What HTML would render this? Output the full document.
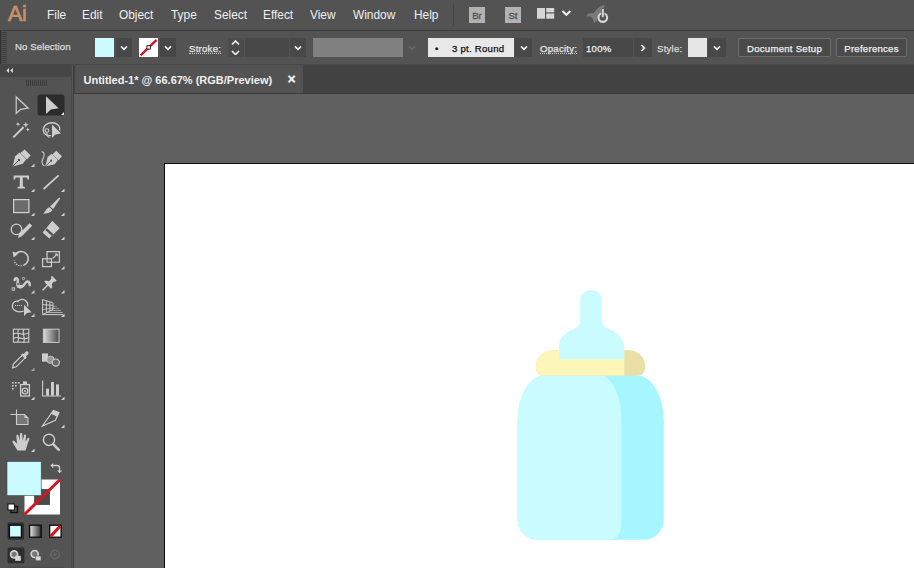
<!DOCTYPE html>
<html><head><meta charset="utf-8">
<style>
html,body{margin:0;padding:0;}
body{width:914px;height:568px;overflow:hidden;background:#606060;font-family:"Liberation Sans","DejaVu Sans",sans-serif;position:relative;color:#e8e8e8;}
.abs{position:absolute;}
#menubar{left:0;top:0;width:914px;height:30px;background:#535353;}
#menubar .mi{transform:scaleX(.95);transform-origin:0 0;position:absolute;top:8px;font-size:12.5px;color:#f0f0f0;line-height:14px;white-space:nowrap;}
#ctrl{left:0;top:31px;width:914px;height:33px;background:#535353;}
#sepline{left:0;top:30px;width:914px;height:1px;background:#3c3c3c;}
#tabstrip{left:74px;top:64px;width:840px;height:29px;background:#424242;}
#tab{left:75px;top:64px;width:228px;height:29px;background:#535353;}
#tabline{left:74px;top:93px;width:840px;height:1px;background:#3c3c3c;}
#tools{left:0;top:64px;width:71px;height:504px;background:#535353;}
#toolsline{left:73px;top:64px;width:1px;height:504px;background:#3c3c3c;}
#toolshead{left:0;top:64px;width:73px;height:12px;background:#464646;}
#canvas{left:74px;top:94px;width:840px;height:474px;background:#606060;}
#artboard{left:164px;top:163px;width:760px;height:420px;background:#fff;border:1px solid #0c0c0c;box-sizing:border-box;}
.lbl{-webkit-text-stroke:0.25px currentColor;position:absolute;font-size:9.6px;letter-spacing:0.25px;white-space:nowrap;color:#e4e4e4;line-height:12px;}
.box{position:absolute;box-sizing:border-box;}
</style></head><body>
<div id="menubar" class="abs">
  <div class="abs" style="left:8px;top:0px;font-size:21.5px;line-height:28px;color:#c6916a;letter-spacing:-0.3px;-webkit-text-stroke:0.7px #c6916a;">Ai</div>
  <div class="mi" style="left:47px;">File</div>
  <div class="mi" style="left:82px;">Edit</div>
  <div class="mi" style="left:119px;">Object</div>
  <div class="mi" style="left:171px;">Type</div>
  <div class="mi" style="left:214px;">Select</div>
  <div class="mi" style="left:263px;">Effect</div>
  <div class="mi" style="left:310px;">View</div>
  <div class="mi" style="left:353px;">Window</div>
  <div class="mi" style="left:414px;">Help</div>
  <div class="abs" style="left:453px;top:3px;width:1px;height:23px;background:#464646;"></div>
  <div class="abs" style="left:469px;top:7px;width:16px;height:16px;background:#b2b2b2;color:#505050;font-size:9.5px;line-height:18px;text-align:center;-webkit-text-stroke:0.3px #505050;">Br</div>
  <div class="abs" style="left:505px;top:7px;width:16px;height:16px;background:#b2b2b2;color:#505050;font-size:9.5px;line-height:18px;text-align:center;-webkit-text-stroke:0.3px #505050;">St</div>
  <svg class="abs" style="left:536px;top:7px" width="20" height="14" viewBox="536 7 20 14"><rect x="537" y="8" width="8" height="10.7" fill="#d6d6d6"/><rect x="546.2" y="8" width="8" height="4.3" fill="#d6d6d6"/><rect x="546.2" y="13.5" width="8" height="5.2" fill="#d6d6d6"/></svg>
  <svg class="abs" style="left:560px;top:8px" width="12" height="10" viewBox="560 8 12 10"><polyline points="562.4,11 566.400,14.800 570.400,11" fill="none" stroke="#f0f0f0" stroke-width="2"/></svg>
  <svg class="abs" style="left:584px;top:2px" width="28" height="24" viewBox="584 2 28 24">
    <path d="M604.5,4.5 C600,6 596,9.500 593.500,13 L588,13.500 L586,16.500 L591,16.500 L593,19 L594,23 L597,21 L597.500,17 C601,14.500 604,10 604.500,4.500 Z" fill="#7a7a7a"/>
    <circle cx="602.8" cy="17.600" r="4.300" fill="none" stroke="#d8d8d8" stroke-width="2.100"/>
    <rect x="601.2" y="8.500" width="3.200" height="9" fill="#535353"/>
    <rect x="601.8" y="9" width="2" height="8.200" fill="#d8d8d8"/>
  </svg>

</div>
<div id="sepline" class="abs"></div>
<div id="ctrl" class="abs"></div>
<!--CTRL-->
<div class="abs" style="left:0px;top:32px;width:7px;height:32px;background:repeating-linear-gradient(180deg,#3d3d3d 0 1px,#515151 1px 2px);"></div><div class="abs" style="left:0px;top:31px;width:1px;height:33px;background:#303030;"></div>
<div class="lbl" style="left:15px;top:41px;letter-spacing:0.1px;color:#dcdcdc;">No Selection</div>
<div class="box" style="left:95px;top:38px;width:19px;height:19px;background:#ccfbff;"></div>
<div class="box" style="left:116px;top:38px;width:16px;height:19px;background:#474747;"></div>
<svg class="abs" style="left:118.5px;top:44.5px" width="10" height="6" viewBox="-1 -1 10 6"><polyline points="1,0.4 4.0,3.4 7,0.4" fill="none" stroke="#f0f0f0" stroke-width="1.6"/></svg>
<svg class="abs" style="left:139px;top:38px" width="19" height="19" viewBox="0 0 19 19"><rect width="19" height="19" fill="#fff"/><line x1="1.6" y1="17.300" x2="17.600" y2="1.800" stroke="#d8121f" stroke-width="2.300"/><rect x="7.900" y="7.700" width="3.400" height="3.400" fill="#fff" stroke="#30080a" stroke-width="0.900"/></svg>
<div class="box" style="left:160px;top:38px;width:16px;height:19px;background:#474747;"></div>
<svg class="abs" style="left:163px;top:44.5px" width="10" height="6" viewBox="-1 -1 10 6"><polyline points="1,0.4 4.0,3.4 7,0.4" fill="none" stroke="#f0f0f0" stroke-width="1.6"/></svg>
<div class="lbl" style="left:189px;top:43px;color:#e8e8e8;border-bottom:1px dotted #cfcfcf;height:9.5px;">Stroke:</div>
<div class="box" style="left:228px;top:38px;width:16px;height:19px;background:#4b4b4b;"></div>
<svg class="abs" style="left:231.0px;top:40px" width="9" height="5.5" viewBox="-1 -1 9 5.5"><polyline points="0,3.5 3.5,0 7,3.5" fill="none" stroke="#f0f0f0" stroke-width="1.6"/></svg>
<svg class="abs" style="left:231.0px;top:49.5px" width="9" height="5.5" viewBox="-1 -1 9 5.5"><polyline points="0,0 3.5,3.5 7,0" fill="none" stroke="#f0f0f0" stroke-width="1.6"/></svg>
<div class="box" style="left:245px;top:38px;width:44px;height:19px;background:#484848;"></div>
<div class="box" style="left:290px;top:38px;width:16px;height:19px;background:#484848;"></div>
<svg class="abs" style="left:292.5px;top:44.5px" width="10" height="6" viewBox="-1 -1 10 6"><polyline points="1,0.4 4.0,3.4 7,0.4" fill="none" stroke="#f0f0f0" stroke-width="1.6"/></svg>
<div class="box" style="left:313px;top:38px;width:90px;height:19px;background:#808080;"></div>
<svg class="abs" style="left:407.0px;top:44.5px" width="10" height="6" viewBox="-1 -1 10 6"><polyline points="1,0.4 4.0,3.4 7,0.4" fill="none" stroke="#6a6a6a" stroke-width="1.6"/></svg>
<div class="box" style="left:428px;top:38px;width:86px;height:19px;background:#e8e8e8;"></div>
<div class="lbl" style="left:435px;top:43px;color:#111;">•</div>
<div class="lbl" style="left:452px;top:43px;color:#111;">3 pt. Round</div>
<div class="box" style="left:515px;top:38px;width:17px;height:19px;background:#484848;"></div>
<svg class="abs" style="left:518.5px;top:44.5px" width="10" height="6" viewBox="-1 -1 10 6"><polyline points="1,0.4 4.0,3.4 7,0.4" fill="none" stroke="#f0f0f0" stroke-width="1.6"/></svg>
<div class="lbl" style="left:540px;top:43px;color:#e8e8e8;border-bottom:1px dotted #cfcfcf;height:9.5px;">Opacity:</div>
<div class="box" style="left:583px;top:38px;width:50px;height:19px;background:#484848;"></div>
<div class="lbl" style="left:586px;top:43px;color:#f0f0f0;">100%</div>
<div class="box" style="left:634px;top:38px;width:18px;height:19px;background:#484848;"></div>
<svg class="abs" style="left:639.5px;top:42.5px" width="6" height="10" viewBox="-1 -1 6 10"><polyline points="0.4,1 3.4,4.0 0.4,7" fill="none" stroke="#f0f0f0" stroke-width="1.6"/></svg>
<div class="lbl" style="left:657px;top:43px;color:#dcdcdc;">Style:</div>
<div class="box" style="left:688px;top:38px;width:19px;height:19px;background:#e6e6e6;"></div>
<div class="box" style="left:708px;top:38px;width:18px;height:19px;background:#484848;"></div>
<svg class="abs" style="left:711.5px;top:44.5px" width="10" height="6" viewBox="-1 -1 10 6"><polyline points="1,0.4 4.0,3.4 7,0.4" fill="none" stroke="#f0f0f0" stroke-width="1.6"/></svg>
<div class="box" style="left:738px;top:38px;width:93px;height:19px;background:#4a4a4a;border:1px solid #6c6c6c;border-radius:2px;"></div>
<div class="lbl" style="left:738px;top:43px;width:93px;text-align:center;color:#f0f0f0;">Document Setup</div>
<div class="box" style="left:836px;top:38px;width:71px;height:19px;background:#4a4a4a;border:1px solid #6c6c6c;border-radius:2px;"></div>
<div class="lbl" style="left:836px;top:43px;width:71px;text-align:center;color:#f0f0f0;">Preferences</div>
<!--/CTRL-->
<div id="tabstrip" class="abs"></div>
<div id="tab" class="abs"><div class="lbl" style="left:8.5px;top:10px;font-size:11px;letter-spacing:0;font-weight:bold;color:#f0f0f0;-webkit-text-stroke:0;">Untitled-1* @ 66.67% (RGB/Preview)</div><div class="lbl" style="left:212.5px;top:8.5px;font-size:14px;letter-spacing:0;font-weight:bold;color:#f4f4f4;">×</div></div>
<div id="tabline" class="abs"></div>
<div id="canvas" class="abs"></div>
<div id="artboard" class="abs"></div>
<svg class="abs" style="left:500px;top:280px" width="180" height="288" viewBox="500 280 180 288">
<path d="M545.600,375 A28,45 0 0 0 517.600,420 V519.800 A20,20 0 0 0 537.600,539.800 H643.800 A20,20 0 0 0 663.800,519.800 V420 A28,45 0 0 0 635.800,375 Z" fill="#a5f6ff"/>
<path d="M545.600,375 A28,45 0 0 0 517.600,420 V519.800 A20,20 0 0 0 537.600,539.800 H609.500 A12,15 0 0 0 621.500,524.800 V420 A22,45 0 0 0 599.500,375 Z" fill="#c9fbff"/>
<path d="M551.800,350.200 H629.300 A16,16.400 0 0 1 645.300,366.600 A6.500,9 0 0 1 638.800,375.600 H542.300 A6.500,9 0 0 1 535.800,366.600 A16,16.400 0 0 1 551.800,350.200 Z" fill="#e9e0a6"/>
<path d="M551.800,350.200 H624.200 V375.600 H542.300 A6.500,9 0 0 1 535.800,366.600 A16,16.400 0 0 1 551.800,350.200 Z" fill="#fdf6b9"/>
<path d="M559,359.300 V346 C559,337 568,330.800 575,328.200 C579,326.700 580.200,323.500 580.200,318 V301 A10.900,10.900 0 0 1 602,301 V318 C602,323.500 603.200,326.700 607.200,328.200 C614.200,330.800 624.200,337 624.200,346 V359.300 Z" fill="#c9fbff"/>
</svg>
<div id="tools" class="abs"></div>
<!--TOOLS-->
<svg class="abs" style="left:0;top:64px" width="73" height="504" viewBox="0 64 73 504">
<defs>
<linearGradient id="gr1" x1="0" x2="1" y1="0" y2="0"><stop offset="0" stop-color="#dcdcdc"/><stop offset="1" stop-color="#484848"/></linearGradient>
<linearGradient id="gr2" x1="0" x2="1" y1="0" y2="0"><stop offset="0" stop-color="#e8e8e8"/><stop offset="1" stop-color="#2c2c2c"/></linearGradient>
</defs>
<!-- header -->
<rect x="0" y="64" width="73" height="13" fill="#464646"/>
<path d="M9,68 L6.400,70.500 L9,73 Z M12.800,68 L10.200,70.500 L12.800,73 Z" fill="#e0e0e0"/>
<g stroke="#3a3a3a" stroke-width="1">
<path d="M26.500,80 v6 M28.500,80 v6 M30.500,80 v6 M32.500,80 v6 M34.500,80 v6 M36.500,80 v6 M38.500,80 v6 M40.500,80 v6 M42.500,80 v6 M44.500,80 v6 M46.500,80 v6"/>
</g>
<g fill="#cdcdcd" stroke="none">
<!-- row1 -->
<rect x="37.500" y="94.500" width="27" height="21" rx="2.500" fill="#2c2c2c"/>
<path d="M16.200,97 L16.200,113.300 L20.700,109.300 L28.200,108.200 Z" fill="none" stroke="#cdcdcd" stroke-width="1.200" stroke-linejoin="miter"/>
<path d="M46,96.300 L46,114 L50.800,109.600 L58.600,108.200 Z"/>
<path d="M64,112 L64,115 L61,115 Z" fill="#e6e6e6"/>
<!-- row2 wand -->
<path d="M13.300,137.400 L23.600,127" stroke="#cdcdcd" stroke-width="2" fill="none"/>
<path d="M25.800,121.800 L26.600,124 L28.800,124.800 L26.600,125.600 L25.800,127.800 L25,125.600 L22.800,124.800 L25,124 Z"/>
<path d="M18,122 L18.600,123.600 L20.200,124.200 L18.600,124.800 L18,126.400 L17.400,124.800 L15.800,124.200 L17.400,123.600 Z"/>
<path d="M27.800,127.600 L28.400,129 L29.800,129.600 L28.400,130.200 L27.800,131.600 L27.200,130.200 L25.800,129.600 L27.200,129 Z"/>
<!-- lasso -->
<path d="M51,135.500 C46,136.500 42.500,133 43.500,128.500 C44.500,124 50,122 54.500,123 C58.500,124 60.500,127 59.500,130.500" fill="none" stroke="#cdcdcd" stroke-width="1.300"/>
<circle cx="47" cy="130.500" r="1.800" fill="none" stroke="#cdcdcd" stroke-width="1.100"/>
<path d="M47,132.300 C46.500,134.500 47.500,136.500 49.500,137.500" fill="none" stroke="#cdcdcd" stroke-width="1.100"/>
<path d="M52,124.500 L52,138 L55.400,134.600 L61,133.400 Z"/>
<!-- row3 pen -->
<g id="pen">
<path d="M12.600,166.400 L15.200,156.200 L19.600,152.600 L26.200,159.200 L22.800,163.800 Z"/>
<path d="M21,151.400 L25.200,147.800 L31.200,153.800 L27.600,158 Z" transform="translate(-0.600,1.600)"/>
<path d="M12.600,166.400 L18.400,160.600" stroke="#535353" stroke-width="1" fill="none"/>
<circle cx="19" cy="160" r="1.200" fill="#535353"/>
</g>
<path d="M34.500,163.500 L34.500,167 L31,167 Z"/>
<!-- curvature -->
<g transform="translate(32.600,0.200) translate(12.600,166.400) scale(0.930) translate(-12.600,-166.400)">
<path d="M12.600,166.400 L15.200,156.200 L19.600,152.600 L26.200,159.200 L22.800,163.800 Z"/>
<path d="M21,151.400 L25.200,147.800 L31.200,153.800 L27.600,158 Z" transform="translate(-0.600,1.600)"/>
<path d="M12.600,166.400 L18.400,160.600" stroke="#535353" stroke-width="1" fill="none"/>
<circle cx="19" cy="160" r="1.200" fill="#535353"/>
</g>
<path d="M41.600,151.600 C45,152 44.600,155.500 43,158.500 C41.500,161.500 41.500,164.500 44.500,166" fill="none" stroke="#cdcdcd" stroke-width="1.100"/>
<!-- row4 T -->
<path d="M13.600,175.400 H29 V179.600 H27.600 L27,177.400 H22.800 V186.400 L25,187 V188.400 H17.600 V187 L19.800,186.400 V177.400 H15.600 L15,179.600 H13.600 Z"/>
<path d="M34.500,188.500 L34.500,192 L31,192 Z"/>
<path d="M43.600,189 L58.600,175.400" stroke="#cdcdcd" stroke-width="1.700" fill="none"/>
<path d="M64.500,188.500 L64.500,192 L61,192 Z"/>
<!-- row5 rect -->
<rect x="13.600" y="199.600" width="15.300" height="13" fill="#6c6c6c" stroke="#d2d2d2" stroke-width="1.200"/>
<path d="M34.500,212.500 L34.500,216 L31,216 Z"/>
<!-- brush -->
<path d="M59.200,197.400 L60.200,198.400 L53.200,209 L50,206.400 Z"/>
<path d="M49.200,207.200 L52.400,209.800 C51.500,212.500 47,214 43,213.600 C45.500,212.500 45.500,208.500 49.200,207.200 Z"/>
<path d="M64.500,212.500 L64.500,216 L61,216 Z"/>
<!-- row6 shaper -->
<circle cx="16.500" cy="229.400" r="5.300" fill="none" stroke="#cdcdcd" stroke-width="1.300"/>
<path d="M18,238 L19,233.800 L29.600,223.200 L32.200,225.800 L21.600,236.600 Z"/>
<path d="M34.500,236.500 L34.500,240 L31,240 Z"/>
<!-- eraser -->
<path d="M52.300,220.800 L59.700,228.200 L49.200,238.600 L42.600,232.600 Z"/>
<path d="M45.200,230 L51.800,236 L50.200,237.600 L43.600,231.600 Z" fill="#535353" transform="translate(1.700,-1.700)"/>
<path d="M64.500,236.500 L64.500,240 L61,240 Z"/>
<!-- row7 rotate -->
<path d="M15.200,255 A7,7 0 1 1 24,265" fill="none" stroke="#cdcdcd" stroke-width="1.500"/>
<path d="M24,265 A7,7 0 0 1 14,260.500" fill="none" stroke="#cdcdcd" stroke-width="1.300" stroke-dasharray="1.200 1.200"/>
<path d="M12.600,251.600 L18.400,253.600 L13.600,257.600 Z"/>
<path d="M34.500,266 L34.500,269.500 L31,269.500 Z"/>
<!-- scale -->
<rect x="47" y="251.600" width="12.400" height="10.600" fill="none" stroke="#cdcdcd" stroke-width="1.200"/>
<rect x="42.600" y="258.800" width="8.800" height="7.800" fill="none" stroke="#cdcdcd" stroke-width="1.200"/>
<path d="M52.600,258.600 L56.800,254.400" stroke="#cdcdcd" stroke-width="1.200" fill="none"/>
<path d="M54.400,253.400 L57.800,253.400 L57.800,256.800 Z"/>
<path d="M64.500,266 L64.500,269.500 L61,269.500 Z"/>
<!-- row8 warp -->
<path d="M14.800,281 C14.300,277.800 17.300,277 17.800,279.800 C18.300,283 15.800,286.200 19.300,287.200 C24,288.200 24.800,281.700 27.300,281.500 C29.600,281.400 29.800,284 29.800,286.200" fill="none" stroke="#cdcdcd" stroke-width="2.400"/>
<path d="M16.500,285 L22.500,285 L21,288.300 L17.500,288 Z"/>
<circle cx="18" cy="284" r="1.500" fill="#535353" stroke="#cdcdcd" stroke-width="0.800"/>
<circle cx="23.500" cy="278.500" r="1.200" fill="#535353" stroke="#cdcdcd" stroke-width="0.800"/>
<rect x="12.200" y="287.800" width="2.400" height="2.400" fill="none" stroke="#cdcdcd" stroke-width="0.900"/>
<path d="M34.500,290 L34.500,293.500 L31,293.500 Z"/>
<!-- pin -->
<path d="M51.600,275.600 L56.200,280.400 L55,281.600 L53.600,281.400 L51.400,283.800 L52,287.400 L50.600,288.600 L43.800,281.600 L45.200,280.400 L48.600,281 L51,278.600 L50.600,276.800 Z" transform="translate(0.400,0.200)"/>
<path d="M47.800,285 L42.600,290.200" stroke="#cdcdcd" stroke-width="1.500" fill="none"/>
<path d="M64.500,290 L64.500,293.500 L61,293.500 Z"/>
<!-- row9 shape builder -->
<path d="M23.600,311.200 C18,313 12,310.500 12.400,305.600 C12.800,301.800 16,300.600 18,301.400 C19.500,298.800 24,298.600 26,301 C28,303 28,305 27.400,306.400" fill="none" stroke="#cdcdcd" stroke-width="1.300"/>
<path d="M15,305.500 H23" stroke="#cdcdcd" stroke-width="1.200" stroke-dasharray="1 1" fill="none"/>
<path d="M24,304.800 L24,316 L27,313 L31.600,312.200 Z"/>
<path d="M34.500,313.500 L34.500,317 L31,317 Z"/>
<!-- perspective -->
<g fill="none" stroke="#cdcdcd" stroke-width="1">
<path d="M42.600,299.400 V314.600 H63"/>
<path d="M42.600,299.600 L53,302.800 V309.500 L42.600,314.600"/>
<path d="M46.400,300.800 V312.600"/>
<path d="M49.900,301.800 V311"/>
<path d="M42.600,304.600 L53,305.400"/>
<path d="M42.600,309.600 L53,307.800" stroke-opacity="0.800"/>
<path d="M53,306.500 H57" stroke-opacity="0.450"/>
<path d="M52,308.500 H59" stroke-opacity="0.550"/>
<path d="M50,310.500 H61" stroke-opacity="0.650"/>
<path d="M47,312.500 H62.500" stroke-opacity="0.750"/>
</g>
<path d="M64.500,313.500 L64.500,317 L61,317 Z"/>
<!-- row10 mesh -->
<g fill="none" stroke="#cdcdcd" stroke-width="1.100">
<rect x="13.400" y="329.200" width="15.400" height="13"/>
<path d="M13.400,334 C17,331 21,336.500 28.800,333"/>
<path d="M13.400,338.500 C18,335 23,341.500 28.800,337.500"/>
<path d="M18.500,329.200 C16.500,333 20.500,338 17.500,342.200"/>
<path d="M24,329.200 C21,334 26.500,338 23.500,342.200"/>
</g>
<!-- gradient -->
<rect x="43.400" y="329.200" width="15.600" height="13.200" fill="url(#gr1)" stroke="#cdcdcd" stroke-width="1"/>
<!-- row11 eyedropper -->
<path d="M12.600,367.800 L13.400,364 L22.400,355 L25.200,357.800 L16.200,366.800 Z" fill="none" stroke="#cdcdcd" stroke-width="1.200"/>
<path d="M21.200,354.600 L22.600,353.200 L23.600,354.200 L26,351.600 C27.200,350.600 29.400,352.600 28.400,354 L25.800,356.600 L26.800,357.600 L25.400,359 Z"/>
<path d="M34.500,367.500 L34.500,371 L31,371 Z" fill-opacity="0.700"/>
<!-- blend -->
<rect x="42" y="353.400" width="6" height="8.200"/>
<circle cx="50.600" cy="359.800" r="3.700" fill="#9a9a9a" stroke="#cdcdcd" stroke-width="0.800"/>
<circle cx="55.800" cy="362.600" r="3.600" fill="#6a6a6a" stroke="#cdcdcd" stroke-width="1.200"/>
<!-- row12 sprayer -->
<rect x="20.600" y="384.600" width="8.800" height="11.400" fill="none" stroke="#cdcdcd" stroke-width="1.300"/>
<rect x="23" y="381.400" width="4" height="2.600"/>
<circle cx="25" cy="391" r="2.800" fill="none" stroke="#cdcdcd" stroke-width="1.300"/>
<circle cx="25" cy="391" r="1"/>
<g>
<rect x="12" y="382" width="1.600" height="1.600"/><rect x="15" y="382" width="1.600" height="1.600"/><rect x="18" y="382" width="1.600" height="1.600"/>
<rect x="12" y="385" width="1.600" height="1.600"/><rect x="15" y="385" width="1.600" height="1.600"/>
<rect x="12" y="388" width="1.600" height="1.600"/>
</g>
<path d="M34.500,396.500 L34.500,400 L31,400 Z"/>
<!-- graph -->
<path d="M42.600,380.600 V396 H61" fill="none" stroke="#cdcdcd" stroke-width="1.100"/>
<rect x="46" y="388.600" width="3" height="7"/><rect x="51" y="382" width="3" height="13.600"/><rect x="56" y="384.400" width="3" height="11.200"/>
<path d="M64.500,396.500 L64.500,400 L61,400 Z"/>
<!-- row13 artboard -->
<path d="M16.500,409.400 V414 M10.400,414.500 H16" stroke="#cdcdcd" stroke-width="1.100" fill="none"/>
<path d="M16.500,414.500 H24.500 L28,418 V424.500 H16.500 Z" fill="#777" stroke="#cdcdcd" stroke-width="1.100"/>
<path d="M24.500,414.500 V418 H28 Z"/>
<!-- slice -->
<path d="M42.400,426 L53.400,410.400 L59,412.600 L55.400,420.200 Z" fill="none" stroke="#cdcdcd" stroke-width="1.200"/>
<path d="M53.400,410.400 L59,412.600 L57,416.800 L51,413.800 Z"/>
<path d="M64.500,424.500 L64.500,428 L61,428 Z"/>
<!-- row14 hand -->
<path d="M17.400,450.400 C15.500,447 14,444.500 12.600,442.400 C12,441 13.600,440.200 14.600,441.200 L17,443.800 L16.400,436 C16.300,434.400 18.300,434.200 18.600,435.800 L19.600,441 L20,434.200 C20.100,432.600 22.200,432.600 22.300,434.200 L22.600,441 L24,435.400 C24.400,433.900 26.300,434.300 26.100,435.900 L25.400,442 L27.400,438.400 C28.200,437 29.900,437.800 29.300,439.300 C28,442.500 27,446 25.600,450.400 Z"/>
<path d="M34.500,448.500 L34.500,452 L31,452 Z"/>
<!-- zoom -->
<circle cx="49" cy="439.800" r="5.600" fill="none" stroke="#cdcdcd" stroke-width="1.500"/>
<path d="M53.200,444.200 L58.800,449.800" stroke="#cdcdcd" stroke-width="2.400" fill="none" stroke-linecap="round"/>
</g>
<!-- colour swatches -->
<path d="M24.500,479.500 H60 V514.500 H24.500 Z M34.300,489.300 V504.800 H49.800 V489.300 Z" fill="#ffffff" fill-rule="evenodd"/>
<rect x="34.300" y="489.300" width="15.500" height="15.500" fill="#4a4a4a"/>
<path d="M24.500,514.500 L60,479.500" stroke="#d8121f" stroke-width="3" fill="none"/>
<rect x="7" y="461.600" width="34.200" height="34" fill="#c9fbff" stroke="#444" stroke-width="0.600"/>
<!-- swap arrows -->
<g fill="none" stroke="#cfcfcf" stroke-width="1.300">
<path d="M53,465.500 H57.500 C59,465.500 59.500,466.500 59.500,468 V471"/>
</g>
<path d="M53.200,463 L50.400,465.600 L53.200,468.200 Z" fill="#cfcfcf"/>
<path d="M57,470.400 L59.600,473.200 L62.200,470.400 Z" fill="#cfcfcf"/>
<!-- default -->
<rect x="11" y="506.500" width="6.500" height="6" fill="#535353" stroke="#111" stroke-width="1.400"/>
<rect x="8" y="504" width="6.500" height="6" fill="#ffffff" stroke="#111" stroke-width="1"/>
<!-- colour mode -->
<rect x="7.500" y="522.600" width="16.600" height="17.200" rx="1.500" fill="#2e2e2e"/>
<rect x="9.400" y="525.200" width="12" height="12" fill="#c9fbff" stroke="#0a0a0a" stroke-width="1.300"/>
<rect x="29.600" y="525.200" width="11.600" height="12" fill="url(#gr2)" stroke="#0a0a0a" stroke-width="1.300"/>
<rect x="49.700" y="525.200" width="11.400" height="12" fill="#fff" stroke="#0a0a0a" stroke-width="1.300"/>
<path d="M50.800,536.200 L60,526.200" stroke="#e00f1f" stroke-width="3"/>
<!-- draw modes -->
<rect x="7.500" y="547.500" width="17" height="15.800" rx="1.500" fill="#2e2e2e"/>
<g stroke="#d4d4d4" stroke-width="1.700">
<circle cx="14.100" cy="554.300" r="3.500" fill="#777"/>
<circle cx="34.700" cy="554" r="3.500" fill="#777"/>
</g>
<rect x="15.200" y="555.800" width="5.600" height="5" fill="#d8d8d8"/>
<rect x="35.600" y="556" width="5.400" height="4.800" fill="#d8d8d8" stroke="#535353" stroke-width="0.600"/>
<circle cx="55" cy="554.500" r="4.200" fill="none" stroke="#666" stroke-width="1.600"/>
<circle cx="55" cy="554.500" r="1.600" fill="#626262"/>
<rect x="7.500" y="566.500" width="57" height="1.500" fill="#4a4a4a"/>
</svg>
<!--/TOOLS-->
<div class="abs" style="left:71px;top:64px;width:1px;height:504px;background:#484848;"></div><div class="abs" style="left:72px;top:64px;width:1px;height:504px;background:#575757;"></div><div id="toolsline" class="abs"></div><div class="abs" style="left:0;top:64px;width:914px;height:1px;background:#464646;"></div>
</body></html>
